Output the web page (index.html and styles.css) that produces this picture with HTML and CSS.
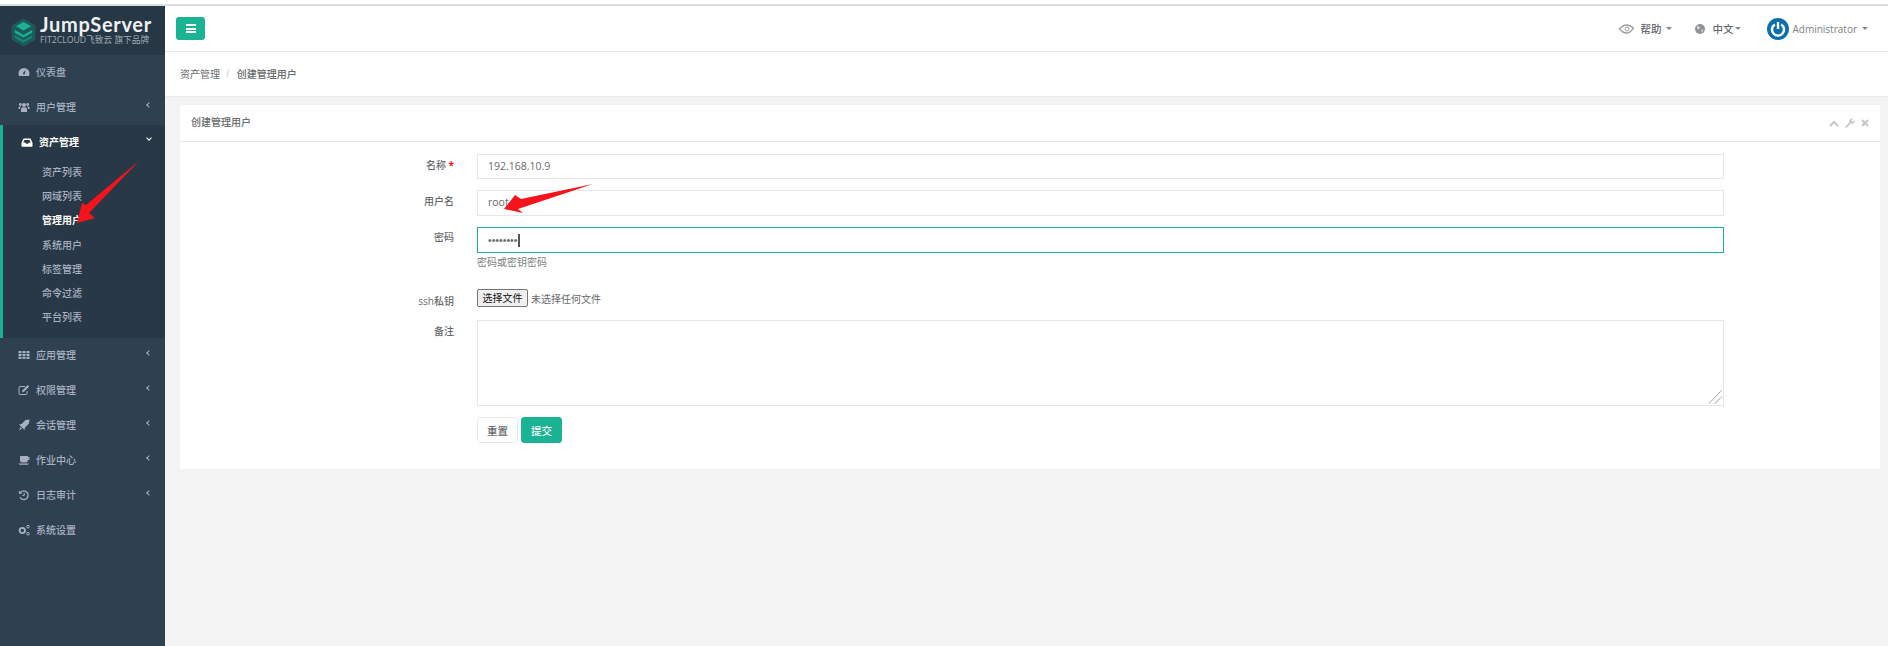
FILE: index.html
```html
<!DOCTYPE html>
<html lang="zh">
<head>
<meta charset="utf-8">
<title>创建管理用户</title>
<link rel="stylesheet" href="styles.css">
</head>
<body>
<div class="strip"></div>
<div class="app">
  <aside class="side">
    <div class="logo">
      <svg class="logo-mark" width="25" height="31" viewBox="0 0 26 30"><path d="M13 .5 25.500 7.700v14.600L13 29.500.5 22.300V7.700Z" fill="#1f5a5a"/><path d="M13 4l8 4.500-8 4.500-8-4.500Z" fill="#1ab394"/><path d="M4 12.500l9 5 9-5v2.800l-9 5-9-5Z" fill="#1ab394"/><path d="M4 18l9 5 9-5v2.500l-9 5-9-5Z" fill="#168a75"/></svg>
      <div class="logo-text"><div class="logo-name">JumpServer</div><div class="logo-sub">FIT2CLOUD飞致云 旗下品牌</div></div>
    </div>
    <nav>
      <a class="item"><svg class="ic" viewBox="0 0 12 12"><path d="M6 2a5.500 5.500 0 0 0-5.500 5.500c0 1 .3 1.900.7 2.500h9.600c.4-.6.7-1.500.7-2.500A5.500 5.500 0 0 0 6 2Zm0 6.500a1 1 0 0 1-.5-1.900L7.500 4 6.900 7.600A1 1 0 0 1 6 8.500Z" fill="#a7b1c2" fill-rule="evenodd"/></svg><span>仪表盘</span></a>
      <a class="item"><svg class="ic" viewBox="0 0 12 12"><circle cx="6" cy="4" r="2" fill="#a7b1c2"/><circle cx="2.300" cy="3.500" r="1.400" fill="#a7b1c2"/><circle cx="9.700" cy="3.500" r="1.400" fill="#a7b1c2"/><path d="M3 11V8q0-1.800 3-1.800T9 8v3ZM.5 8V6.500q0-1 1.800-1h1L2 7v1ZM11.500 8V6.500q0-1-1.800-1h-1L10 7v1Z" fill="#a7b1c2"/></svg><span>用户管理</span><i class="chev"></i></a>
      <div class="group">
        <a class="item open"><svg class="ic" viewBox="0 0 12 12"><path d="M3 2.500h6q.6 0 .9.7l1.600 3.600V10q0 .7-.7.700H1.200Q.5 10.700.5 10V6.800l1.600-3.600q.3-.7.900-.7Zm.4 1.400L2.300 6.500h2l.6 1.200h2.200l.6-1.200h2L8.600 3.900Z" fill="#fff" fill-rule="evenodd"/></svg><span>资产管理</span><i class="chev down"></i></a>
        <ul class="sub">
          <li>资产列表</li>
          <li>网域列表</li>
          <li class="on">管理用户</li>
          <li>系统用户</li>
          <li>标签管理</li>
          <li>命令过滤</li>
          <li>平台列表</li>
        </ul>
      </div>
      <a class="item"><svg class="ic" viewBox="0 0 12 12"><path d="M.5 2h3v2.200h-3Zm4 0h3v2.200h-3Zm4 0h3v2.200h-3ZM.5 4.900h3v2.200h-3Zm4 0h3v2.200h-3Zm4 0h3v2.200h-3ZM.5 7.800h3V10h-3Zm4 0h3V10h-3Zm4 0h3V10h-3Z" fill="#a7b1c2"/></svg><span>应用管理</span><i class="chev"></i></a>
      <a class="item"><svg class="ic" viewBox="0 0 12 12"><path d="M7 2.500H2q-1 0-1 1v6q0 1 1 1h6q1 0 1-1V7" fill="none" stroke="#a7b1c2"/><path d="M4 8.300l.5-2L9.700 1l1.500 1.500L6 7.800Z" fill="#a7b1c2"/></svg><span>权限管理</span><i class="chev"></i></a>
      <a class="item"><svg class="ic" viewBox="0 0 12 12"><path d="M11.500.5 11 4.500 7 8.500l-.5 2.500L5 9.500l-2.500-2.500L1 5.500l2.500-.5 4-4Z M2.500 8l1.500 1.500L1 11.500Z" fill="#a7b1c2"/></svg><span>会话管理</span><i class="chev"></i></a>
      <a class="item"><svg class="ic" viewBox="0 0 12 12"><path d="M2 2h8v1h1.500v3H10q-.3 2.500-2 2.500H4Q2 8.500 2 6Zm8 2v1h.5V4ZM.5 9.500h10.500l-1 1.200H1.500Z" fill="#a7b1c2" fill-rule="evenodd"/></svg><span>作业中心</span><i class="chev"></i></a>
      <a class="item"><svg class="ic" viewBox="0 0 12 12"><path d="M2.500 3.500A4.300 4.300 0 1 1 2 8.200" fill="none" stroke="#a7b1c2" stroke-width="1.300"/><path d="M.8 1.500l3.500 3.300H.8Z" fill="#a7b1c2"/><path d="M6.200 3.800v2.700H4.500" fill="none" stroke="#a7b1c2"/></svg><span>日志审计</span><i class="chev"></i></a>
      <a class="item"><svg class="ic" viewBox="0 0 12 12"><circle cx="4.300" cy="6.500" r="2.700" fill="none" stroke="#a7b1c2" stroke-width="1.800"/><circle cx="10" cy="2.700" r="1.300" fill="none" stroke="#a7b1c2"/><circle cx="10" cy="9.700" r="1.300" fill="none" stroke="#a7b1c2"/></svg><span>系统设置</span></a>
    </nav>
  </aside>
  <main class="main">
    <header class="top">
      <button class="menu-btn" type="button"><i></i><i></i><i></i></button>
      <div class="top-right">
        <span class="top-link"><svg class="eye" width="15" height="10" viewBox="0 0 15 10"><path d="M.5 5Q4 1 7.500 1T14.500 4Q11 9 7.500 9T.5 5Z" fill="none" stroke="#9a9d9f" stroke-width="1.300"/><circle cx="8" cy="5" r="2" fill="none" stroke="#9a9d9f"/></svg>帮助<i class="caret"></i></span>
        <span class="top-link lang"><svg width="10" height="10" viewBox="0 0 10 10"><circle cx="5" cy="5" r="5" fill="#8f9395"/><path d="M2 1.500 5 3 4 5.500 2 5ZM6 6l2.500-.5L7 9Z" fill="#d5d7d8"/></svg>中文<i class="caret tight"></i></span>
        <span class="top-user"><svg width="22" height="22" viewBox="0 0 22 22"><circle cx="11" cy="11" r="11" fill="#0a70ad"/><path d="M7.800 6.500a6 6 0 1 0 6.400 0" fill="none" stroke="#fff" stroke-width="2.400"/><path d="M11 4v7" stroke="#fff" stroke-width="2.400"/></svg><span>Administrator</span><i class="caret"></i></span>
      </div>
    </header>
    <div class="crumbs"><span>资产管理</span><em>/</em><span class="cur">创建管理用户</span></div>
    <section class="card">
      <div class="card-head">
        <span>创建管理用户</span>
        <div class="tools">
          <svg width="10" height="7" viewBox="0 0 10 7"><path d="M1 6l4-4 4 4" fill="none" stroke="#c4c6c7" stroke-width="2"/></svg>
          <svg width="10" height="10" viewBox="0 0 10 10"><path d="M.5 8.500 4.500 4.300Q4 1.800 6 .7q1.200-.5 2.300-.2L6.500 2.300l.3 1.100 1.100.3L9.700 1.900q.5 2-1 3.200-1.200.9-3 .5L1.700 9.700q-.6.3-1.100-.2-.3-.5-.1-1Z" fill="#c4c6c7"/></svg>
          <svg width="8" height="8" viewBox="0 0 9 9"><path d="M1.200 1.200l6.600 6.600M7.800 1.200 1.200 7.800" stroke="#c4c6c7" stroke-width="2.400"/></svg>
        </div>
      </div>
      <form class="form">
        <div class="row r1"><label>名称 <b>*</b></label><input class="field" type="text" value="192.168.10.9"></div>
        <div class="row r2"><label>用户名</label><input class="field" type="text" value="root"></div>
        <div class="row r3"><label>密码</label><div class="col"><div class="field focus"><span class="dots">••••••••</span><i class="cursor"></i></div><p class="hint">密码或密钥密码</p></div></div>
        <div class="row r4"><label>ssh私钥</label><div class="file"><span class="file-btn">选择文件</span><span class="file-none">未选择任何文件</span></div></div>
        <div class="row r5"><label>备注</label><div class="area-wrap"><textarea class="area"></textarea><svg class="grip" width="13" height="14" viewBox="0 0 13 14"><path d="M0 13.500 12.500.5M6 13.500 12.500 7" stroke="#444" stroke-dasharray="1.400 1.400" fill="none"/></svg></div></div>
        <div class="row r6"><label></label><div class="btns"><button class="btn" type="button">重置</button><button class="btn primary" type="button">提交</button></div></div>
      </form>
    </section>
  </main>
</div>
<svg class="arrow arrow-a" width="75" height="65" viewBox="0 0 75 65"><path d="M69 1 16 45 12 43 7 63 25 58 19 53Z" fill="#f5141c"/></svg>
<svg class="arrow arrow-b" width="92" height="30" viewBox="0 0 92 30"><path d="M90 0 18 15 12 11 1 25 20 29 15 25Z" fill="#f5141c"/></svg>
</body>
</html>
```
FILE: styles.css
```css
* { box-sizing: border-box; }
html, body { margin: 0; height: 646px; overflow: hidden; }
body { font-family: "Open Sans", "Noto Sans CJK SC", sans-serif; font-size: 10px; color: #676a6c; background: #f3f3f3; position: relative; }
.strip { height: 6px; background: #fff; border-bottom: 2px solid #dcdcdc; }
.app { display: flex; height: 640px; }
.side { width: 165px; flex: none; background: #2f4050; color: #a7b1c2; }
.logo { height: 49px; background: #263746; display: flex; align-items: flex-start; gap: 4px; padding-left: 11px; }
.logo-mark { flex: none; margin-top: 11px; }
.logo-text { margin-top: 7px; }
.logo-name { font-family: Lato, sans-serif; font-weight: 700; font-size: 20px; line-height: 22px; color: #eef0f2; letter-spacing: .7px; }
.logo-sub { font-size: 8.700px; line-height: 11px; color: #a5adb5; white-space: nowrap; }
.item { height: 35px; display: flex; align-items: center; padding: 0 0 2px 18px; color: #a7b1c2; font-weight: 500; position: relative; }
.ic { width: 12px; height: 12px; margin-right: 6px; flex: none; }
.chev { position: absolute; right: 14px; top: 13px; width: 4px; height: 4px; border-left: 1px solid #a7b1c2; border-bottom: 1px solid #a7b1c2; transform: rotate(45deg); }
.chev.down { transform: rotate(-45deg); border-color: #fff; top: 11px; }
.group { height: 213px; background: #293846; border-left: 3px solid #1ab394; }
.open { color: #fff; font-weight: 600; }
.sub { list-style: none; margin: 0; padding: 0 0 0 39px; }
.sub li { height: 24.200px; line-height: 25px; font-weight: 500; }
.sub .on { color: #fff; font-weight: 600; }
.main { flex: 1; min-width: 0; }
.top { height: 46px; background: #fff; border-bottom: 1px solid #e7eaec; display: flex; align-items: center; justify-content: space-between; padding: 0 20px 0 11px; }
.menu-btn { width: 29px; height: 23px; border: 0; border-radius: 3px; background: #1ab394; padding: 0; display: flex; flex-direction: column; align-items: center; justify-content: center; gap: 1.500px; }
.menu-btn i { width: 10px; height: 2px; background: #fff; }
.top-right { display: flex; align-items: center; }
.top-link { display: flex; align-items: center; font-size: 10.500px; font-weight: 500; }
.eye { margin-right: 6px; }
.lang { margin-left: 23px; }
.lang svg { margin-right: 7px; }
.caret { width: 0; height: 0; margin-left: 5px; border: 3px solid transparent; border-top-color: #85888a; border-bottom: 0; }
.caret.tight { margin-left: 2px; }
.top-user { display: flex; align-items: center; margin-left: 26px; color: #7d8082; }
.top-user span { margin-left: 3px; }
.crumbs { height: 45px; background: #fff; border-bottom: 1px solid #e7eaec; display: flex; align-items: center; padding: 0 0 2px 15px; }
.crumbs em { font-style: normal; color: #ccc; margin: 0 7px 0 6px; }
.crumbs .cur { font-weight: 500; }
.card { margin: 8px 8px 0 15px; height: 364px; background: #fff; }
.card-head { height: 37px; border-bottom: 1px solid #e7eaec; display: flex; align-items: center; justify-content: space-between; padding: 0 11px 3px; font-weight: 500; }
.tools { display: flex; align-items: center; gap: 6px; margin-top: 3px; }
.form { padding-top: 12px; }
.row { display: flex; align-items: flex-start; }
.row label { width: 274px; margin-right: 23px; text-align: right; font-weight: 500; line-height: 22px; flex: none; }
.row label b { color: #ed1c24; font-weight: 700; }
.field { width: 1247px; height: 26px; border: 1px solid #e5e6e7; padding: 0 10px 2px; font: 400 10.500px "Open Sans", "Noto Sans CJK SC", sans-serif; color: #676a6c; background: #fff; outline: 0; display: block; }
.r1 { height: 36px; }
.r2 { height: 37px; }
.r3 { height: 62px; }
.r3 label { line-height: 20px; }
.r4 { height: 31px; }
.r1 .field { height: 25px; }
.focus { border-color: #1ab394; display: flex; align-items: center; padding-bottom: 0; }
.dots { font: 400 10.500px "Liberation Sans", sans-serif; color: #676a6c; }
.cursor { width: 1.500px; height: 13px; background: #555; margin-left: 1px; }
.hint { margin: 2px 0 0; line-height: 14px; color: #7b7e80; }
.file { display: flex; align-items: center; height: 18px; font-family: "Noto Sans CJK SC", sans-serif; }
.file-btn { width: 51px; height: 18px; border: 1px solid #767676; border-radius: 2px; background: #efefef; color: #111; text-align: center; line-height: 15px; }
.file-none { margin-left: 3px; }
.r4 label { line-height: 24px; }
.area-wrap { position: relative; width: 1247px; height: 86px; }
.area { width: 100%; height: 100%; border: 1px solid #e5e6e7; display: block; outline: 0; background: #fff; resize: none; padding: 6px 10px; }
.grip { position: absolute; right: 2px; bottom: 2px; }
.r5 { height: 97px; }
.btns { display: flex; gap: 3px; }
.btn { width: 41px; height: 26px; border: 1px solid #e7eaec; border-radius: 3px; background: #fff; color: #676a6c; font: 500 10.500px "Open Sans", "Noto Sans CJK SC", sans-serif; padding: 0; }
.primary { background: #1ab394; border-color: #1ab394; color: #fff; }
.arrow { position: absolute; }
.arrow-a { left: 70px; top: 160px; }
.arrow-b { left: 503px; top: 184px; }
```
